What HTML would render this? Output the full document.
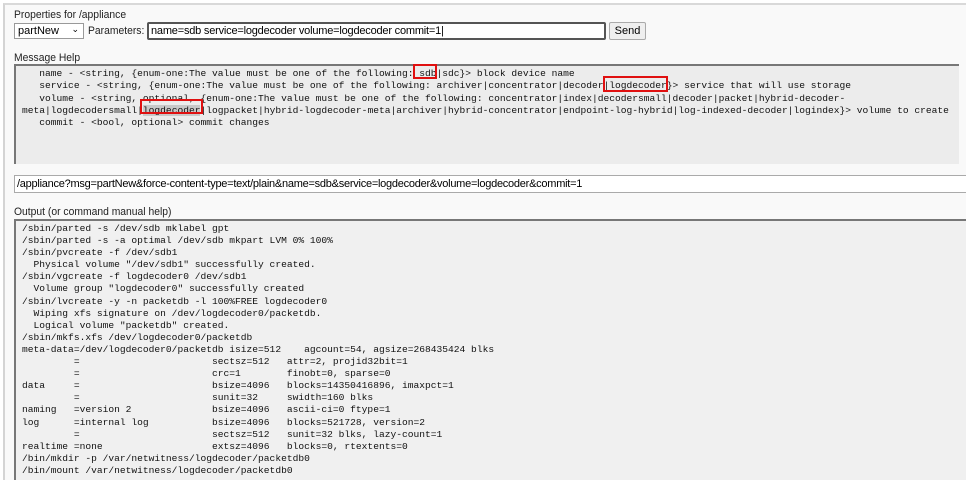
<html><head><style>
body{margin:0;width:966px;height:480px;background:#fff;overflow:hidden;position:relative;font-family:"Liberation Sans",Arial,sans-serif}
.frame{position:absolute;left:3px;top:3px;width:963px;height:477px;border-left:2px solid #d4d4d4;border-top:2px solid #d9d9d9;background:#f9f9f9;box-sizing:border-box}
.lbl{position:absolute;font-size:11px;color:#222;transform:scaleX(.94);transform-origin:left}
pre{margin:0;white-space:pre;font-family:"Liberation Mono","DejaVu Sans Mono",monospace;color:#111}
.box{position:absolute;box-sizing:border-box;overflow:hidden}
.rb{position:absolute;border:2px solid #e01010;box-sizing:border-box}
</style></head><body>
<div class="frame"></div>
<div class="lbl" style="left:14px;top:9px">Properties for /appliance</div>
<div class="box" style="left:14px;top:23px;width:70px;height:16px;border:1px solid #999;background:#fff;font-size:11px;padding:1px 3px">partNew<span style="position:absolute;right:4px;top:0;font-size:9px">&#8964;</span></div>
<div class="lbl" style="left:88px;top:25px">Parameters:</div>
<div class="box" style="left:147px;top:22px;width:459px;height:18px;border:2px solid #555;border-radius:2px;background:#fff;font-size:11px;padding:1px 2px;letter-spacing:-.2px">name=sdb service=logdecoder volume=logdecoder commit=1|</div>
<div class="box" style="left:609px;top:22px;width:37px;height:18px;border:1px solid #aaa;border-radius:2px;background:#efefef;font-size:11px;text-align:center;line-height:16px">Send</div>
<div class="lbl" style="left:14px;top:52px">Message Help</div>
<div class="box" style="left:14px;top:64px;width:945px;height:100px;border-top:2px solid #777;border-left:2px solid #777;background:#ececec;padding:2px 0 0 6px">
<pre style="font-size:9.6px;line-height:12.3px">   name - &lt;string, {enum-one:The value must be one of the following: sdb|sdc}&gt; block device name
   service - &lt;string, {enum-one:The value must be one of the following: archiver|concentrator|decoder|logdecoder}&gt; service that will use storage
   volume - &lt;string, optional, {enum-one:The value must be one of the following: concentrator|index|decodersmall|decoder|packet|hybrid-decoder-
meta|logdecodersmall|<span style="background:#c8c8c8">logdecoder</span>|logpacket|hybrid-logdecoder-meta|archiver|hybrid-concentrator|endpoint-log-hybrid|log-indexed-decoder|logindex}&gt; volume to create
   commit - &lt;bool, optional&gt; commit changes</pre></div>
<div class="rb" style="left:413px;top:64px;width:24px;height:15px"></div>
<div class="rb" style="left:603px;top:76px;width:65px;height:16px"></div>
<div class="rb" style="left:140px;top:99px;width:63px;height:15px"></div>
<div class="box" style="left:14px;top:175px;width:952px;height:18px;border:1px solid #aaa;border-right:none;background:#fff;font-size:11px;padding:2px 2px;letter-spacing:-.25px">/appliance?msg=partNew&amp;force-content-type=text/plain&amp;name=sdb&amp;service=logdecoder&amp;volume=logdecoder&amp;commit=1</div>
<div class="lbl" style="left:14px;top:206px">Output (or command manual help)</div>
<div class="box" style="left:14px;top:219px;width:952px;height:261px;border-top:2px solid #777;border-left:2px solid #777;background:#f0f0f0;padding:2px 0 0 6px">
<pre style="font-size:9.6px;line-height:12.1px">/sbin/parted -s /dev/sdb mklabel gpt
/sbin/parted -s -a optimal /dev/sdb mkpart LVM 0% 100%
/sbin/pvcreate -f /dev/sdb1
  Physical volume "/dev/sdb1" successfully created.
/sbin/vgcreate -f logdecoder0 /dev/sdb1
  Volume group "logdecoder0" successfully created
/sbin/lvcreate -y -n packetdb -l 100%FREE logdecoder0
  Wiping xfs signature on /dev/logdecoder0/packetdb.
  Logical volume "packetdb" created.
/sbin/mkfs.xfs /dev/logdecoder0/packetdb
meta-data=/dev/logdecoder0/packetdb isize=512    agcount=54, agsize=268435424 blks
         =                       sectsz=512   attr=2, projid32bit=1
         =                       crc=1        finobt=0, sparse=0
data     =                       bsize=4096   blocks=14350416896, imaxpct=1
         =                       sunit=32     swidth=160 blks
naming   =version 2              bsize=4096   ascii-ci=0 ftype=1
log      =internal log           bsize=4096   blocks=521728, version=2
         =                       sectsz=512   sunit=32 blks, lazy-count=1
realtime =none                   extsz=4096   blocks=0, rtextents=0
/bin/mkdir -p /var/netwitness/logdecoder/packetdb0
/bin/mount /var/netwitness/logdecoder/packetdb0</pre></div>
</body></html>
